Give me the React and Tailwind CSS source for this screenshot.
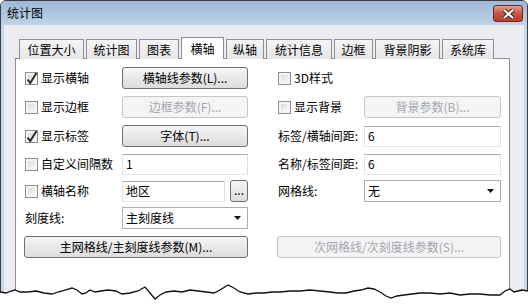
import React from "react";

const font = { fontFamily: '"Noto Sans CJK SC", "Liberation Sans", sans-serif' };

const tabs = [
  { label: "位置大小", w: "w-[65px]" },
  { label: "统计图", w: "w-[51px]" },
  { label: "图表", w: "w-[40px]" },
  { label: "横轴", w: "w-[43px]", active: true },
  { label: "纵轴", w: "w-[38px]" },
  { label: "统计信息", w: "w-[66px]" },
  { label: "边框", w: "w-[39px]" },
  { label: "背景阴影", w: "w-[65px]" },
  { label: "系统库", w: "w-[52px]" },
];

const tear = [
  [0, 292], [6, 293], [11, 291], [15, 290], [20, 292], [28, 292], [36, 291], [44, 293],
  [52, 294], [58, 292], [65, 290], [72, 288], [77, 290], [82, 294], [86, 293], [90, 290],
  [95, 292], [101, 291], [108, 290], [116, 291], [122, 294], [130, 293], [138, 291],
  [145, 287], [150, 293], [155, 299], [160, 295], [166, 292], [174, 291], [182, 292],
  [190, 290], [198, 291], [206, 292], [214, 293], [220, 290], [228, 285], [234, 288],
  [240, 292], [248, 294], [256, 293], [264, 293], [272, 292], [280, 292], [290, 291],
  [300, 291], [310, 290], [320, 291], [330, 292], [338, 293], [346, 293], [354, 291],
  [361, 290], [368, 288], [374, 289], [380, 292], [386, 296], [391, 298], [397, 296],
  [404, 295], [412, 294], [420, 293], [430, 293], [440, 294], [450, 293], [460, 295],
  [470, 294], [480, 294], [490, 295], [500, 295], [505, 291], [510, 289], [514, 292],
  [518, 291], [522, 290], [528, 291],
];

const Checkbox = ({ checked }) => (
  <span className="relative w-[13px] h-[13px] border border-[#8e8f8f] bg-[#f4f4f4] shrink-0">
    <span className="absolute inset-[2px] bg-gradient-to-br from-[#dadada] to-[#f9f9f9]" />
    {checked && (
      <svg className="absolute -left-[1px] -top-[2px]" width="14" height="15" viewBox="0 0 14 15">
        <path d="M2.5 8.5 L5.2 12 L11.5 2" fill="none" stroke="#2b2b2b" strokeWidth="2" />
      </svg>
    )}
  </span>
);

const Check = ({ checked, label }) => (
  <div className="flex items-center gap-[3px]">
    <Checkbox checked={checked} />
    <span className="text-[12px] leading-none text-black">{label}</span>
  </div>
);

const Button = ({ children, disabled, className = "" }) => (
  <div
    className={`h-[22px] flex items-center justify-center rounded-[3px] border text-[12px] leading-none ${
      disabled
        ? "border-[#c3c6cb] bg-[#f4f4f4] text-[#a3a6b0]"
        : "border-[#707070] bg-gradient-to-b from-[#f6f6f6] via-[#e9e9e9] to-[#dcdcdc] text-black"
    } ${className}`}
  >
    {children}
  </div>
);

const Input = ({ value, className = "" }) => (
  <div
    className={`h-[21px] flex items-center px-[3px] border border-[#abadb3] border-l-[#e2e3ea] border-r-[#dbdfe6] border-b-[#e3e9ef] bg-white text-[12px] leading-none text-black ${className}`}
  >
    {value}
  </div>
);

const Select = ({ value, className = "" }) => (
  <div
    className={`h-[22px] flex items-center justify-between pl-[3px] pr-[5px] border border-[#abadb3] bg-white text-[12px] leading-none text-black ${className}`}
  >
    <span>{value}</span>
    <svg width="8" height="5" viewBox="0 0 8 5">
      <path d="M0 0 H7 L3.5 4 Z" fill="#111" />
    </svg>
  </div>
);

const Label = ({ children, className = "" }) => (
  <span className={`text-[12px] leading-none text-black ${className}`}>{children}</span>
);

const App = () => {
  return (
    <div className="relative w-[528px] h-[305px] bg-white overflow-hidden" style={font}>
      <div className="flex flex-col h-[305px] border border-[#3d3d3d] rounded-t-[6px] overflow-hidden bg-[#c6d7eb]">
        {/* title bar */}
        <div className="h-[24px] shrink-0 flex justify-between bg-gradient-to-b from-[#9db8d8] to-[#c0d3ea] pl-[6px] pr-[4px]">
          <span className="mt-[6px] text-[12px] leading-none text-black">统计图</span>
          <div className="mt-[4px] w-[30px] h-[17px] rounded-[3px] border border-[#6e2a22] bg-gradient-to-b from-[#e49b8c] via-[#c9533f] to-[#b2412f] flex items-center justify-center">
            <svg width="13" height="10" viewBox="0 0 13 10">
              <path d="M2 1 L11 9 M11 1 L2 9" stroke="#4a2520" strokeWidth="4" />
              <path d="M2 1 L11 9 M11 1 L2 9" stroke="#fff" strokeWidth="2" />
            </svg>
          </div>
        </div>

        {/* body */}
        <div className="flex-1 flex flex-col mx-[3px] bg-[#ebebf0] pt-[12px] pl-[11px] pr-[14px]">
          <div className="relative z-10 -mb-px flex items-end h-[22px] gap-[2px] pl-[4px]">
            {tabs.map((t) =>
              t.active ? (
                <div
                  key={t.label}
                  className={`${t.w} h-[22px] flex items-center justify-center border border-b-0 border-[#898c95] bg-white text-[12px] leading-none text-black`}
                >
                  {t.label}
                </div>
              ) : (
                <div
                  key={t.label}
                  className={`${t.w} h-[20px] pt-[1px] flex items-center justify-center border border-b-0 border-[#8d8f94] bg-gradient-to-b from-[#f4f4f4] to-[#e6e6e9] text-[12px] leading-none text-black`}
                >
                  {t.label}
                </div>
              )
            )}
          </div>

          <div className="flex-1 border border-[#898c95] bg-white pt-[8px] pl-[9px] pr-[7px] flex flex-col">
            {/* row 1 */}
            <div className="flex items-center h-[22px]">
              <div className="w-[223px] flex items-center">
                <div className="w-[97px]"><Check checked label="显示横轴" /></div>
                <Button className="w-[126px]">横轴线参数(L)...</Button>
              </div>
              <div className="ml-[30px] w-[223px] flex items-center">
                <Check label="3D样式" />
              </div>
            </div>

            {/* row 2 */}
            <div className="mt-[7px] flex items-center h-[22px]">
              <div className="w-[223px] flex items-center">
                <div className="w-[97px]"><Check label="显示边框" /></div>
                <Button disabled className="w-[126px]">边框参数(F)...</Button>
              </div>
              <div className="ml-[30px] w-[223px] flex items-center">
                <div className="w-[86px]"><Check label="显示背景" /></div>
                <Button disabled className="w-[137px]">背景参数(B)...</Button>
              </div>
            </div>

            {/* row 3 */}
            <div className="mt-[7px] flex items-center h-[22px]">
              <div className="w-[223px] flex items-center">
                <div className="w-[97px]"><Check checked label="显示标签" /></div>
                <Button className="w-[126px]">字体(T)...</Button>
              </div>
              <div className="ml-[30px] w-[223px] flex items-center">
                <Label className="w-[86px]">标签/横轴间距:</Label>
                <Input value="6" className="w-[137px]" />
              </div>
            </div>

            {/* row 4 */}
            <div className="mt-[6px] flex items-center h-[22px]">
              <div className="w-[223px] flex items-center">
                <div className="w-[97px]"><Check label="自定义间隔数" /></div>
                <Input value="1" className="w-[126px]" />
              </div>
              <div className="ml-[30px] w-[223px] flex items-center">
                <Label className="w-[86px]">名称/标签间距:</Label>
                <Input value="6" className="w-[137px]" />
              </div>
            </div>

            {/* row 5 */}
            <div className="mt-[5px] flex items-center h-[22px]">
              <div className="w-[223px] flex items-center">
                <div className="w-[97px]"><Check label="横轴名称" /></div>
                <Input value="地区" className="w-[103px]" />
                <Button className="ml-[5px] w-[18px] items-end pb-[5px] text-[11px]">...</Button>
              </div>
              <div className="ml-[30px] w-[223px] flex items-center">
                <Label className="w-[86px]">网格线:</Label>
                <Select value="无" className="w-[137px]" />
              </div>
            </div>

            {/* row 6 */}
            <div className="mt-[5px] flex items-center h-[22px]">
              <div className="w-[223px] flex items-center">
                <Label className="w-[97px]">刻度线:</Label>
                <Select value="主刻度线" className="w-[126px]" />
              </div>
            </div>

            {/* row 7 */}
            <div className="mt-[7px] flex items-center h-[22px]">
              <Button className="-ml-[1px] w-[224px]">主网格线/主刻度线参数(M)...</Button>
              <Button disabled className="ml-[29px] w-[224px]">次网格线/次刻度线参数(S)...</Button>
            </div>
          </div>
        </div>
      </div>

      {/* torn bottom edge */}
      <svg className="absolute left-0 top-0" width="528" height="305" viewBox="0 0 528 305">
        <polygon
          points={`${tear.map(([x, y]) => `${x},${y}`).join(" ")} 528,305 0,305`}
          fill="#fff"
        />
        <polyline
          points={tear.map(([x, y]) => `${x},${y}`).join(" ")}
          fill="none"
          stroke="#111"
          strokeWidth="1.3"
        />
      </svg>
    </div>
  );
};

export default App;
